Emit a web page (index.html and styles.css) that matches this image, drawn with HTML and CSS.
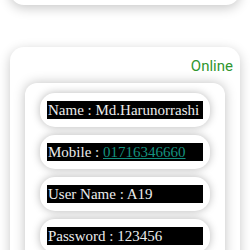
FILE: index.html
```html
<!DOCTYPE html>
<html lang="en">
<head>
    <meta charset="UTF-8">
    <meta name="viewport" content="width=device-width, initial-scale=1.0">
    <title>Profile</title>
    <link rel="stylesheet" href="styles.css">
</head>
<body>
    <div class="card card-top"></div>

    <div class="card">
        <p class="status">Online</p>
        <div class="info">
            <div class="pill"><span class="field">Name : Md.Harunorrashi</span></div>
            <div class="pill"><span class="field">Mobile : <a href="#">01716346660</a></span></div>
            <div class="pill"><span class="field">User Name : A19</span></div>
            <div class="pill"><span class="field">Password : 123456</span></div>
        </div>
    </div>
</body>
</html>
```

FILE: styles.css
```css
body{
    margin: 0;
    background-color: #fff;
    overflow: hidden;
}

.card{
    margin: 0 10px;
    padding: 10px 0 12px;
    background-color: #fff;
    border-radius: 14px;
    box-shadow: 0 3px 12px rgba(0, 0, 0, 0.22);
}
.card-top{
    height: 30px;
    margin-top: -47px;
    margin-bottom: 42px;
}

.status{
    margin: 0 7px 8px 0;
    text-align: right;
    font-family: Roboto, "Noto Sans", sans-serif;
    font-size: 15px;
    color: #2f962f;
}

.info{
    display: flex;
    flex-direction: column;
    align-items: center;
    gap: 8px;
    margin: 0 15px;
    padding: 10px 0 14px;
    background-color: #fff;
    border-radius: 12px;
    box-shadow: 0 0 12px rgba(0, 0, 0, 0.25);
}

.pill{
    width: 156px;
    padding: 8px 7px;
    background-color: #fff;
    border-radius: 15px;
    box-shadow: 0 0 9px rgba(0, 0, 0, 0.28);
}

.field{
    display: block;
    height: 18px;
    line-height: 19px;
    padding-left: 1px;
    background-color: #000;
    color: #ececec;
    font-family: "Liberation Serif", serif;
    font-size: 15px;
    white-space: nowrap;
}
.field a{
    color: #14917f;
}
```
